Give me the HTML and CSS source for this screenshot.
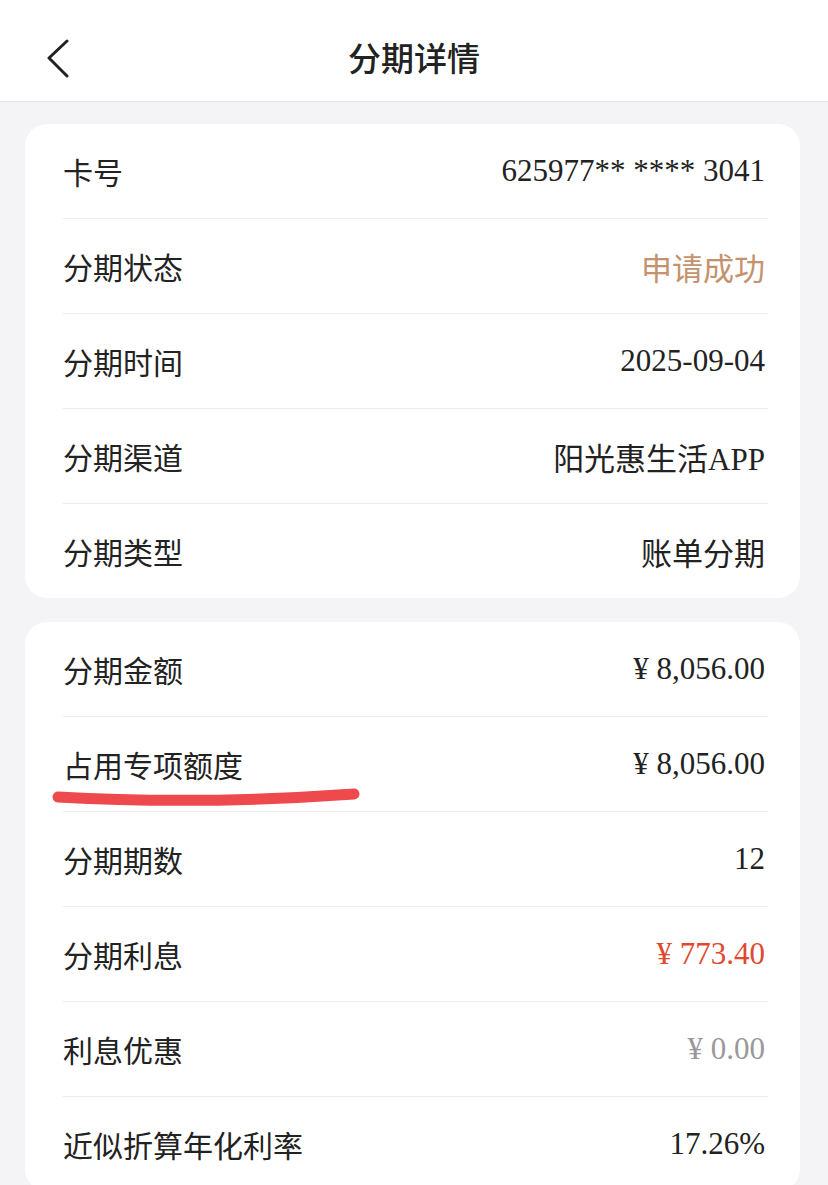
FILE: index.html
```html
<!DOCTYPE html>
<html lang="zh-CN">

<head>
    <meta charset="UTF-8">
    <meta name="viewport" content="width=device-width, initial-scale=1.0">
    <title>分期详情</title>
    <link rel="stylesheet" href="styles.css">
</head>

<body>
    <header class="nav-bar">
        <a class="back" href="#">
            <svg width="30" height="40" viewBox="0 0 30 40">
                <path d="M21 2 L3 19 L21 37" fill="none" stroke="#222" stroke-width="3" stroke-linecap="round" stroke-linejoin="round" />
            </svg>
        </a>
        <h1>分期详情</h1>
    </header>

    <div class="page">
        <!-- 基本信息 -->
        <section class="card">
            <div class="row">
                <span class="label">卡号</span>
                <span class="value">625977** **** 3041</span>
            </div>
            <div class="row">
                <span class="label">分期状态</span>
                <span class="value status">申请成功</span>
            </div>
            <div class="row">
                <span class="label">分期时间</span>
                <span class="value">2025-09-04</span>
            </div>
            <div class="row">
                <span class="label">分期渠道</span>
                <span class="value">阳光惠生活APP</span>
            </div>
            <div class="row">
                <span class="label">分期类型</span>
                <span class="value">账单分期</span>
            </div>
        </section>

        <!-- 金额信息 -->
        <section class="card">
            <div class="row">
                <span class="label">分期金额</span>
                <span class="value">¥ 8,056.00</span>
            </div>
            <div class="row marked">
                <span class="label">占用专项额度</span>
                <span class="value">¥ 8,056.00</span>
                <svg class="mark" width="320" height="24" viewBox="0 0 320 24">
                    <path d="M7 11 Q 150 19 303 8" fill="none" stroke="#ee4a4d" stroke-width="11" stroke-linecap="round" />
                </svg>
            </div>
            <div class="row">
                <span class="label">分期期数</span>
                <span class="value">12</span>
            </div>
            <div class="row">
                <span class="label">分期利息</span>
                <span class="value interest">¥ 773.40</span>
            </div>
            <div class="row">
                <span class="label">利息优惠</span>
                <span class="value discount">¥ 0.00</span>
            </div>
            <div class="row">
                <span class="label">近似折算年化利率</span>
                <span class="value">17.26%</span>
            </div>
        </section>
    </div>
</body>

</html>
```

FILE: styles.css
```css
body {
    margin: 0;
    background-color: #f4f4f6;
    font-family: "Noto Sans CJK SC", "Noto Sans", sans-serif;
    color: #222;
}

.nav-bar {
    position: relative;
    height: 102px;
    background-color: #fff;
    border-bottom: 1px solid #e3e3e3;
    box-sizing: border-box;
    display: flex;
    align-items: center;
    justify-content: center;
}

.back {
    position: absolute;
    left: 46px;
    top: 39px;
    display: block;
    line-height: 0;
}

.nav-bar h1 {
    margin: 0;
    font-size: 33px;
    font-weight: 500;
    color: #222;
    padding-top: 12px;
}

.page {
    padding: 22px 28px 0 25px;
}

.card {
    background-color: #fff;
    border-radius: 22px;
    margin-bottom: 24px;
}

.row {
    position: relative;
    height: 95px;
    margin: 0 32px 0 38px;
    border-bottom: 1px solid #ececec;
    box-sizing: border-box;
    display: flex;
    align-items: center;
    justify-content: space-between;
}

.row:last-child {
    border-bottom: none;
    height: 94px;
}

.label {
    font-size: 30px;
    color: #222;
}

.value {
    font-family: "Liberation Serif", "Noto Sans CJK SC", serif;
    font-size: 31px;
    color: #222;
    padding-right: 3px;
}

.status {
    color: #c4926c;
}

.interest {
    color: #e0482f;
}

.discount {
    color: #999;
}

.mark {
    position: absolute;
    left: -12px;
    top: 69px;
}
```
